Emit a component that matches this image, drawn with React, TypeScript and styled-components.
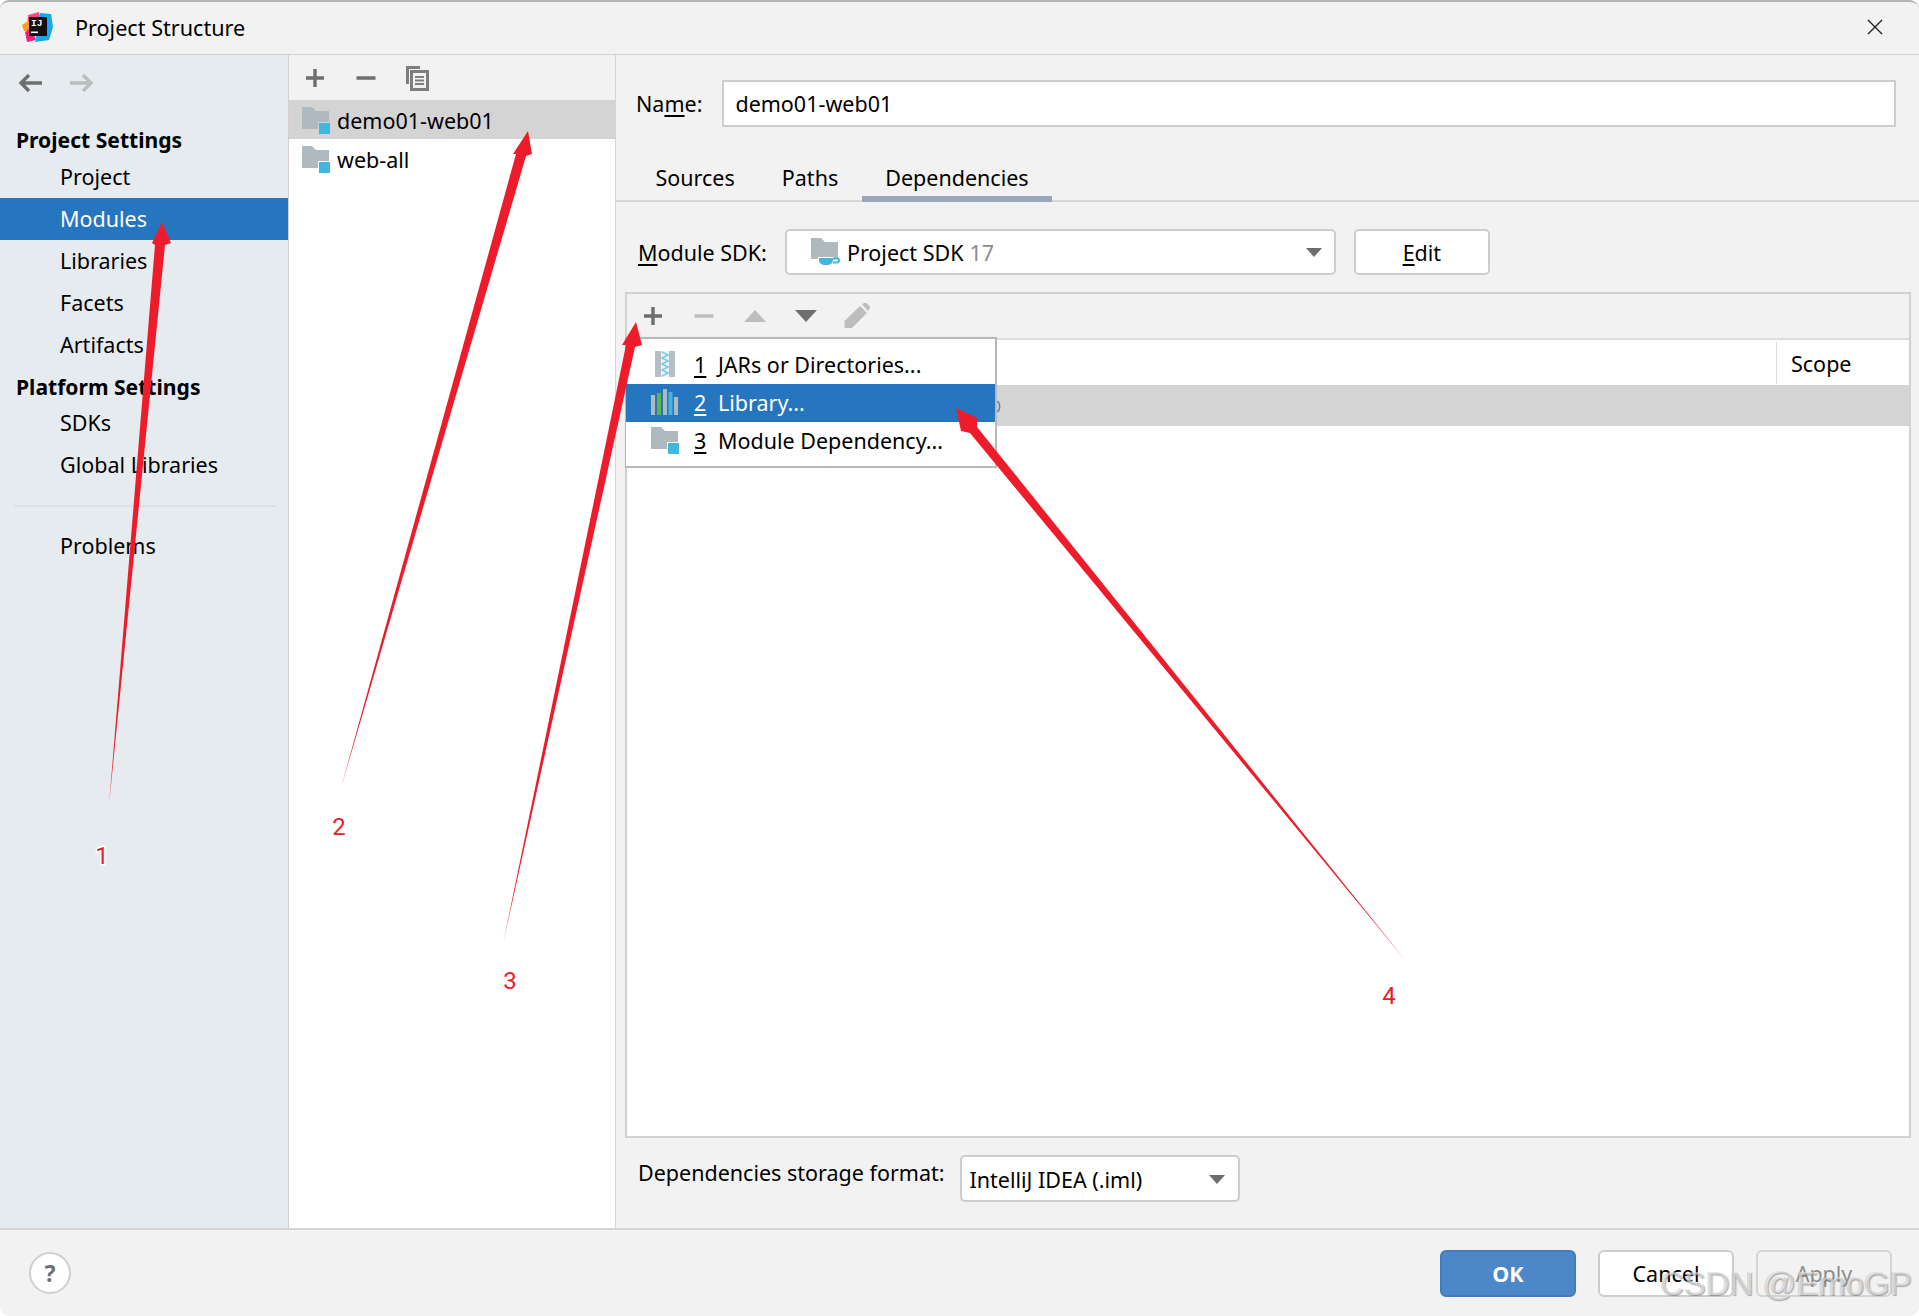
import React from "react";
import styled, { createGlobalStyle } from "styled-components";

const Global = createGlobalStyle`
  html, body { margin: 0; padding: 0; background: #fff; }
  body { font-family: "Noto Sans", "Open Sans", sans-serif; font-size: 21.5px; color: #000; }
  * { box-sizing: border-box; }
`;

const Win = styled.div`
  position: relative; width: 1919px; height: 1316px; display: flex; flex-direction: column;
  background: #f2f2f2; border-top: 2px solid #b4b4b4; border-radius: 9px; overflow: hidden;
`;
const TitleBar = styled.header`
  height: 53px; flex: none; display: flex; align-items: center; padding: 0 36px 2px 22px;
  border-bottom: 1px solid #d1d1d1;
`;
const TitleText = styled.span`margin-left: 22px; flex: 1; font-size: 21.6px;`;
const Body = styled.main`flex: 1; min-height: 0; display: flex;`;
const Sidebar = styled.nav`
  width: 289px; flex: none; background: #e6ebf0; border-right: 1px solid #d1d1d1; display: flex; flex-direction: column;
`;
const NavArrows = styled.div`height: 63px; display: flex; align-items: center; gap: 28px; padding: 0 0 7px 18px; flex: none;`;
const NavHead = styled.div<{ $h: number }>`
  height: ${p => p.$h}px; display: flex; align-items: center; padding: 4px 0 0 16px; font-weight: 700; font-size: 21.1px; flex: none;
`;
const NavItem = styled.div<{ $active?: boolean }>`
  height: 42px; flex: none; display: flex; align-items: center; padding: 0 0 1px 60px;
  background: ${p => (p.$active ? "#2675bf" : "transparent")};
  color: ${p => (p.$active ? "#fff" : "#000")};
`;
const NavRule = styled.div`height: 2px; margin: 19px 12px 18px 14px; background: #dcdfe3; flex: none;`;
const ListPane = styled.section`
  width: 327px; flex: none; background: #fff; border-right: 1px solid #d6d6d6; display: flex; flex-direction: column;
`;
const BarRow = styled.div<{ $h: number }>`
  height: ${p => p.$h}px; flex: none; display: flex; align-items: center; background: #f2f2f2;
`;
const Slot = styled.span`width: 51px; flex: none; display: flex; align-items: center; justify-content: center;`;
const ListRow = styled.div<{ $sel?: boolean }>`
  height: 39px; display: flex; align-items: center; gap: 6px; padding: 2px 0 0 13px; background: ${p => (p.$sel ? "#d4d4d4" : "transparent")};
`;
const Detail = styled.section`flex: 1; min-width: 0; display: flex; flex-direction: column;`;
const NameRow = styled.div`display: flex; align-items: center; margin: 25px 23px 0 20px; flex: none;`;
const Label = styled.span`flex: none;`;
const U = styled.span`text-decoration: underline; text-underline-offset: 3px;`;
const NameInput = styled.div`
  margin-left: 20px; flex: 1; height: 47px; background: #fff; border: 2px solid #cdcdcd; display: flex; align-items: center; padding: 0 0 1px 11px;
`;
const Tabs = styled.div`
  height: 75px; flex: none; padding-left: 16px; display: flex; align-items: flex-end; border-bottom: 2px solid #d6d6d6;
`;
const Tab = styled.div<{ $on?: boolean }>`
  height: 47px; padding: 4px 23.5px 0; display: flex; align-items: center; margin-bottom: -2px;
  border-bottom: 6px solid ${p => (p.$on ? "#9aa7bd" : "transparent")};
`;
const SdkRow = styled.div`display: flex; align-items: center; margin: 27px 0 0 22px; flex: none; height: 46px;`;
const Combo = styled.div<{ $w: number }>`
  width: ${p => p.$w}px; height: 46px; flex: none; background: #fff; border: 2px solid #cdcdcd; border-radius: 5px;
  display: flex; align-items: center; position: relative;
`;
const ComboCaret = styled.span`
  position: absolute; right: 12px; top: 50%; margin-top: -4px; width: 0; height: 0;
  border-left: 8px solid transparent; border-right: 8px solid transparent; border-top: 9px solid #6e6e6e;
`;
const Muted = styled.span`color: #8c8c8c; margin-left: 6px;`;
const SdkCombo = styled(Combo)`margin-left: 18px; padding-left: 24px; gap: 7px;`;
const PlainBtn = styled.div`
  width: 136px; height: 46px; margin-left: 18px; background: #fff; border: 2px solid #cdcdcd; border-radius: 5px;
  display: flex; align-items: center; justify-content: center;
`;
const Panel = styled.div`
  position: relative; flex: 1; min-height: 0; margin: 17px 8px 0 9px; border: 2px solid #d1d1d1;
  background: #fff; display: flex; flex-direction: column;
`;
const PanelBar = styled(BarRow)`border-bottom: 2px solid #dcdcdc;`;
const TableHead = styled.div`height: 45px; flex: none; display: flex; justify-content: flex-end; padding: 2px 0 0;`;
const ScopeCell = styled.div`
  width: 133px; height: 42px; border-left: 1px solid #dcdcdc; padding-left: 14px; display: flex; align-items: center;
`;
const SelRow = styled.div`height: 41px; flex: none; background: #d4d4d4;`;
const Popup = styled.div`
  position: absolute; left: -2px; top: 43px; width: 372px; height: 131px; background: #fff;
  border: 2px solid #b9b9b9; border-left-width: 1px; display: flex; flex-direction: column;
  box-shadow: 0 0 1px rgba(0,0,0,.1);
`;
const PopRow = styled.div<{ $sel?: boolean; $h: number; $pt?: number; $pb?: number }>`
  height: ${p => p.$h}px; flex: none; display: flex; align-items: center; padding: ${p => p.$pt ?? 0}px 0 ${p => p.$pb ?? 0}px 25px;
  background: ${p => (p.$sel ? "#2675bf" : "transparent")}; color: ${p => (p.$sel ? "#fff" : "#000")};
`;
const PopIcon = styled.span<{ $inset?: number }>`
  width: 43px; flex: none; display: flex; justify-content: flex-start; padding-left: ${p => p.$inset ?? 0}px;
`;
const PopNum = styled.span`width: 24px; flex: none; text-decoration: underline; text-underline-offset: 3px;`;
const StorageRow = styled.div`height: 90px; flex: none; display: flex; align-items: center; padding: 0 0 9px 22px;`;
const StorageLabel = styled.span`margin-top: -12px; flex: none;`;
const StorageCombo = styled(Combo)`margin-left: 16px; height: 47px; padding: 2px 0 0 7px; & > span:last-child { right: 13px; }`;
const Footer = styled.footer`
  height: 88px; flex: none; border-top: 2px solid #d4d4d4; display: flex; align-items: center; padding: 0 27px 0 29px; gap: 22px;
`;
const Help = styled.div`
  width: 42px; height: 42px; border-radius: 50%; background: #fff; border: 2px solid #cfcfcf; color: #6e6e6e; font-weight: 700;
  display: flex; align-items: center; justify-content: center; margin-right: auto; font-size: 23px;
`;
const FootBtn = styled.div<{ $kind: "ok" | "plain" | "off" }>`
  width: 136px; height: 47px; border-radius: 6px; display: flex; align-items: center; justify-content: center; padding-top: 1px;
  border: 2px solid ${p => (p.$kind === "ok" ? "#437cb9" : p.$kind === "plain" ? "#cdcdcd" : "#d4d4d4")};
  background: ${p => (p.$kind === "ok" ? "#4c87c8" : p.$kind === "plain" ? "#fff" : "#f2f2f2")};
  color: ${p => (p.$kind === "ok" ? "#fff" : p.$kind === "plain" ? "#000" : "#8c8c8c")};
  font-weight: ${p => (p.$kind === "ok" ? 700 : 400)};
`;
const Watermark = styled.div`
  position: absolute; left: 1660px; top: 1260px; font: 33px/44px "Liberation Sans", sans-serif; white-space: nowrap;
  color: rgba(255,255,255,.5); text-shadow: 1px 1px 1px rgba(90,90,90,.5), -1px 0 0 rgba(120,120,120,.25); pointer-events: none;
`;
const Marks = styled.svg`position: absolute; left: 0; top: -2px; width: 1919px; height: 1316px; pointer-events: none;`;
const MarkDigit = styled.text`
  font: 400 24px "Roboto", sans-serif; fill: #ee1c2b; stroke: #fff; stroke-width: 3px; paint-order: stroke; text-anchor: middle;
`;

const Logo = () => (
  <svg width="31" height="30" viewBox="0 0 31 30">
    <polygon points="6,3 17,0 19,10 5,14" fill="#fc4a86" />
    <polygon points="0,13 8,8 9,20 2,19" fill="#ff9a1f" />
    <polygon points="3,20 9,16 14,28 5,30" fill="#f5207d" />
    <polygon points="18,1 29,2 31,15 27,28 13,30 17,12" fill="#12a9ee" />
    <rect x="7" y="5" width="18" height="19" fill="#120f12" />
    <text x="9" y="14" fill="#fff" fontFamily="Liberation Mono, monospace" fontWeight="700" fontSize="9.5">IJ</text>
    <rect x="9" y="19.5" width="7" height="1.6" fill="#fff" />
  </svg>
);
const Close = () => (
  <svg width="16" height="16" viewBox="0 0 16 16"><path d="M1 1 15 15M15 1 1 15" stroke="#222" strokeWidth="1.4" /></svg>
);
const NavArrow = ({ dir, c }: { dir: "l" | "r"; c: string }) => (
  <svg width="24" height="20" viewBox="0 0 24 20" style={dir === "r" ? { transform: "scaleX(-1)" } : undefined}>
    <path d="M24 10H3M11 2 3 10l8 8" fill="none" stroke={c} strokeWidth="3.4" />
  </svg>
);
const Plus = () => (
  <svg width="20" height="20" viewBox="0 0 20 20"><path d="M10 1v18M1 10h18" stroke="#6e6e6e" strokeWidth="3.4" /></svg>
);
const Minus = ({ c = "#6e6e6e" }: { c?: string }) => (
  <svg width="20" height="20" viewBox="0 0 20 20"><path d="M0.5 10h19" stroke={c} strokeWidth="3.4" /></svg>
);
const Copy = () => (
  <svg width="24" height="26" viewBox="0 0 24 26">
    <path d="M1 19V1h14v3H4v15z" fill="#7d7d7d" />
    <rect x="6.5" y="6.5" width="16" height="18" fill="#f2f2f2" stroke="#7d7d7d" strokeWidth="3" />
    <path d="M10 12h9M10 15.5h9M10 19h9" stroke="#7d7d7d" strokeWidth="2" />
  </svg>
);
const Tri = ({ up, c }: { up?: boolean; c: string }) => (
  <svg width="22" height="12" viewBox="0 0 22 12"><polygon points={up ? "11,0 22,12 0,12" : "0,0 22,0 11,12"} fill={c} /></svg>
);
const Pencil = () => (
  <svg width="26" height="26" viewBox="0 0 26 26">
    <path d="M0.5 18 16 3l7 7L8 25H0.5z" fill="#bdbdbd" />
    <path d="M18 1.5 20 0a2 2 0 0 1 2.5 0L25.500 3a2 2 0 0 1 0 2.500L24 8z" fill="#bdbdbd" />
  </svg>
);
const ModuleFolder = ({ cut = "#fff" }: { cut?: string }) => (
  <svg width="29" height="27" viewBox="0 0 29 27" style={{ flex: "none" }}>
    <path d="M0 0h10l4 4h13v18H0z" fill="#afb9c0" />
    <rect x="16" y="15" width="13" height="12" fill={cut} />
    <rect x="17" y="16" width="11" height="11" fill="#40b6e0" />
  </svg>
);
const CupFolder = () => (
  <svg width="29" height="28" viewBox="0 0 29 28" style={{ flex: "none" }}>
    <path d="M0 0h10l4 4h13v17H0z" fill="#afb9c0" />
    <path d="M7 19h16v3a6 6 0 0 1-6 6h-4a6 6 0 0 1-6-6z" fill="#fff" />
    <path d="M8 20h14v2a5 5 0 0 1-5 5h-4a5 5 0 0 1-5-5z" fill="#40b6e0" />
    <path d="M22 20.500h4a2 2 0 0 1 0 4h-4" fill="none" stroke="#40b6e0" strokeWidth="2" />
  </svg>
);
const Jar = () => (
  <svg width="20" height="26" viewBox="0 0 20 26">
    <rect width="20" height="26" fill="#b5bec5" />
    <rect x="6" width="8" height="26" fill="#eef3f6" />
    <path d="M7 1l6 3-6 3 6 3-6 3 6 3-6 3 6 3-6 3" fill="none" stroke="#7fcbe8" strokeWidth="1.8" />
  </svg>
);
const Library = () => (
  <svg width="27" height="26" viewBox="0 0 27 26">
    <rect x="0" y="6" width="4" height="20" fill="#afb9c0" />
    <rect x="6" y="4" width="4" height="22" fill="#62b543" />
    <rect x="12" y="0" width="4" height="26" fill="#afb9c0" />
    <rect x="17.500" y="3" width="4" height="23" fill="#40b6e0" />
    <rect x="23" y="8" width="4" height="18" fill="#afb9c0" />
  </svg>
);

const Arrow = ({ pts }: { pts: string }) => <polygon points={pts} fill="#ee1c2b" />;

export default function App() {
  return (
    <>
      <Global />
      <Win>
        <TitleBar>
          <Logo />
          <TitleText>Project Structure</TitleText>
          <Close />
        </TitleBar>
        <Body>
          <Sidebar>
            <NavArrows>
              <NavArrow dir="l" c="#6e6e6e" />
              <NavArrow dir="r" c="#bdbdbd" />
            </NavArrows>
            <NavHead $h={38}>Project Settings</NavHead>
            <NavItem>Project</NavItem>
            <NavItem $active>Modules</NavItem>
            <NavItem>Libraries</NavItem>
            <NavItem>Facets</NavItem>
            <NavItem>Artifacts</NavItem>
            <NavHead $h={36}>Platform Settings</NavHead>
            <NavItem>SDKs</NavItem>
            <NavItem>Global Libraries</NavItem>
            <NavRule />
            <NavItem>Problems</NavItem>
          </Sidebar>
          <ListPane>
            <BarRow $h={45}>
              <Slot><Plus /></Slot>
              <Slot><Minus /></Slot>
              <Slot><Copy /></Slot>
            </BarRow>
            <ListRow $sel><ModuleFolder cut="#d4d4d4" />demo01-web01</ListRow>
            <ListRow><ModuleFolder />web-all</ListRow>
          </ListPane>
          <Detail>
            <NameRow>
              <Label>Na<U>m</U>e:</Label>
              <NameInput>demo01-web01</NameInput>
            </NameRow>
            <Tabs>
              <Tab>Sources</Tab>
              <Tab>Paths</Tab>
              <Tab $on>Dependencies</Tab>
            </Tabs>
            <SdkRow>
              <Label><U>M</U>odule SDK:</Label>
              <SdkCombo $w={551}>
                <CupFolder />
                <span>Project SDK<Muted>17</Muted></span>
                <ComboCaret />
              </SdkCombo>
              <PlainBtn><span><U>E</U>dit</span></PlainBtn>
            </SdkRow>
            <Panel>
              <PanelBar $h={46}>
                <Slot><Plus /></Slot>
                <Slot><Minus c="#bdbdbd" /></Slot>
                <Slot><Tri up c="#bdbdbd" /></Slot>
                <Slot><Tri c="#6e6e6e" /></Slot>
                <Slot><Pencil /></Slot>
              </PanelBar>
              <TableHead><ScopeCell>Scope</ScopeCell></TableHead>
              <SelRow />
              <Popup>
                <PopRow $h={45} $pt={5}>
                  <PopIcon $inset={4}><Jar /></PopIcon>
                  <PopNum>1</PopNum>JARs or Directories...
                </PopRow>
                <PopRow $sel $h={38} $pb={2}>
                  <PopIcon><Library /></PopIcon>
                  <PopNum>2</PopNum>Library...
                </PopRow>
                <PopRow $h={44} $pb={8}>
                  <PopIcon><ModuleFolder /></PopIcon>
                  <PopNum>3</PopNum>Module Dependency...
                </PopRow>
              </Popup>
            </Panel>
            <StorageRow>
              <StorageLabel>Dependencies storage format:</StorageLabel>
              <StorageCombo $w={280}>
                IntelliJ IDEA (.iml)
                <ComboCaret />
              </StorageCombo>
            </StorageRow>
          </Detail>
        </Body>
        <Footer>
          <Help>?</Help>
          <FootBtn $kind="ok">OK</FootBtn>
          <FootBtn $kind="plain">Cancel</FootBtn>
          <FootBtn $kind="off">Apply</FootBtn>
        </Footer>
        <Watermark>CSDN @EmoGP</Watermark>
        <Marks viewBox="0 0 1919 1316">
          <path d="M997.5 401a8 8 0 0 1 0 11" fill="none" stroke="#5f7f9f" strokeWidth="1.5" />
          <Arrow pts="109,805 155,245 152,243 162,222 171,243 165,245" />
          <Arrow pts="341,788 516,154 513,154 528,131 532,154 526,156" />
          <Arrow pts="503,944 626,345 622,345 636,322 642,345 635,347" />
          <Arrow pts="1406,961 977,427 977,418 956,408 961,431 970,433" />
          <MarkDigit x="102" y="864">1</MarkDigit>
          <MarkDigit x="339" y="835">2</MarkDigit>
          <MarkDigit x="510" y="989">3</MarkDigit>
          <MarkDigit x="1389" y="1004">4</MarkDigit>
        </Marks>
      </Win>
    </>
  );
}
